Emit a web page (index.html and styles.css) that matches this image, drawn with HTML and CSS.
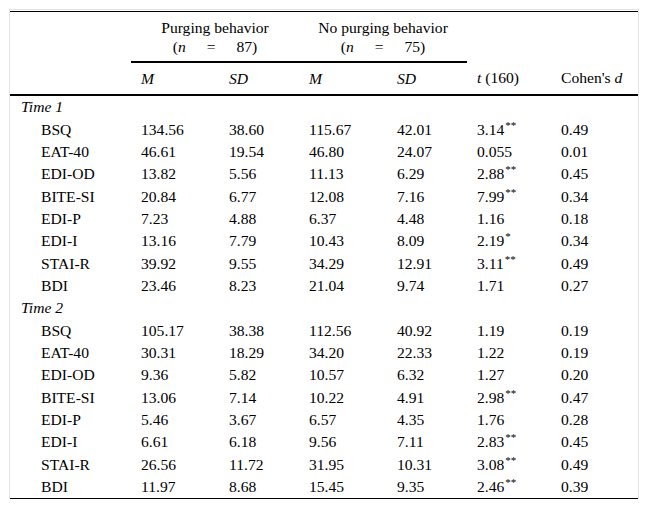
FILE: index.html
```html
<!DOCTYPE html>
<html>
<head>
<meta charset="utf-8">
<link rel="stylesheet" href="styles.css">
</head>
<body>
<div class="wrap">
<table class="tbl">
<colgroup>
<col class="c1"><col class="c2"><col class="c3"><col class="c4"><col class="c5"><col class="c6"><col class="c7">
</colgroup>
<thead>
<tr class="h1">
<th rowspan="2" class="blank"></th>
<th colspan="2" class="grp">Purging behavior<br><span class="nline">(<i>n</i> = 87)</span></th>
<th colspan="2" class="grp">No purging behavior<br><span class="nline">(<i>n</i> = 75)</span></th>
<th rowspan="2" class="hb"><i>t</i> (160)</th>
<th rowspan="2" class="hb">Cohen's <i>d</i></th>
</tr>
<tr class="h2">
<th class="sub"><i>M</i></th>
<th class="sub"><i>SD</i></th>
<th class="sub"><i>M</i></th>
<th class="sub"><i>SD</i></th>
</tr>
</thead>
<tbody>
<tr><td class="sec" colspan="7"><i>Time 1</i></td></tr>
<tr><td class="lab">BSQ</td><td>134.56</td><td>38.60</td><td>115.67</td><td>42.01</td><td>3.14<sup>**</sup></td><td>0.49</td></tr>
<tr><td class="lab">EAT-40</td><td>46.61</td><td>19.54</td><td>46.80</td><td>24.07</td><td>0.055</td><td>0.01</td></tr>
<tr><td class="lab">EDI-OD</td><td>13.82</td><td>5.56</td><td>11.13</td><td>6.29</td><td>2.88<sup>**</sup></td><td>0.45</td></tr>
<tr><td class="lab">BITE-SI</td><td>20.84</td><td>6.77</td><td>12.08</td><td>7.16</td><td>7.99<sup>**</sup></td><td>0.34</td></tr>
<tr><td class="lab">EDI-P</td><td>7.23</td><td>4.88</td><td>6.37</td><td>4.48</td><td>1.16</td><td>0.18</td></tr>
<tr><td class="lab">EDI-I</td><td>13.16</td><td>7.79</td><td>10.43</td><td>8.09</td><td>2.19<sup>*</sup></td><td>0.34</td></tr>
<tr><td class="lab">STAI-R</td><td>39.92</td><td>9.55</td><td>34.29</td><td>12.91</td><td>3.11<sup>**</sup></td><td>0.49</td></tr>
<tr><td class="lab">BDI</td><td>23.46</td><td>8.23</td><td>21.04</td><td>9.74</td><td>1.71</td><td>0.27</td></tr>
<tr><td class="sec" colspan="7"><i>Time 2</i></td></tr>
<tr><td class="lab">BSQ</td><td>105.17</td><td>38.38</td><td>112.56</td><td>40.92</td><td>1.19</td><td>0.19</td></tr>
<tr><td class="lab">EAT-40</td><td>30.31</td><td>18.29</td><td>34.20</td><td>22.33</td><td>1.22</td><td>0.19</td></tr>
<tr><td class="lab">EDI-OD</td><td>9.36</td><td>5.82</td><td>10.57</td><td>6.32</td><td>1.27</td><td>0.20</td></tr>
<tr><td class="lab">BITE-SI</td><td>13.06</td><td>7.14</td><td>10.22</td><td>4.91</td><td>2.98<sup>**</sup></td><td>0.47</td></tr>
<tr><td class="lab">EDI-P</td><td>5.46</td><td>3.67</td><td>6.57</td><td>4.35</td><td>1.76</td><td>0.28</td></tr>
<tr><td class="lab">EDI-I</td><td>6.61</td><td>6.18</td><td>9.56</td><td>7.11</td><td>2.83<sup>**</sup></td><td>0.45</td></tr>
<tr><td class="lab">STAI-R</td><td>26.56</td><td>11.72</td><td>31.95</td><td>10.31</td><td>3.08<sup>**</sup></td><td>0.49</td></tr>
<tr><td class="lab">BDI</td><td>11.97</td><td>8.68</td><td>15.45</td><td>9.35</td><td>2.46<sup>**</sup></td><td>0.39</td></tr>
</tbody>
</table>
</div>
</body>
</html>
```
FILE: styles.css
```css
html, body {
  margin: 0;
  padding: 0;
  background: #fff;
}
body {
  font-family: "Liberation Serif", "Times New Roman", serif;
  font-size: 15.6px;
  color: #000;
}
.wrap {
  margin: 9px 0 0 9px;
  width: 628px;
  border: 1px solid #e3e3e3;
  border-bottom: none;
  padding-top: 1px;
}
.tbl {
  width: 628px;
  table-layout: fixed;
  border-collapse: collapse;
  border-top: 1px solid #000;
  border-bottom: 1px solid #000;
}
.c1 { width: 121px; }
.c2 { width: 88px; }
.c3 { width: 80px; }
.c4 { width: 88px; }
.c5 { width: 80px; }
.c6 { width: 84px; }
.c7 { width: 87px; }
th, td {
  padding: 0 0 0 10px;
  text-align: left;
  font-weight: normal;
  white-space: nowrap;
}
.h1 th { height: 49px; }
.h1 .grp {
  text-align: center;
  padding: 0;
  vertical-align: middle;
  line-height: 19px;
  border-bottom: 2px solid #000;
}
.nline { word-spacing: 17px; }
.hb {
  vertical-align: bottom;
  padding-bottom: 7px;
  border-bottom: 2px solid #000;
}
.blank { border-bottom: 2px solid #000; }
.h2 th {
  height: 31px;
  vertical-align: middle;
  border-bottom: 2px solid #000;
}
tbody td {
  height: 22.35px;
  line-height: 18px;
  vertical-align: middle;
}
td.sec { padding-left: 11px; }
td.lab { padding-left: 31px; }
sup {
  font-size: 11px;
  line-height: 0;
  vertical-align: 6px;
  margin-left: 1px;
}
```
